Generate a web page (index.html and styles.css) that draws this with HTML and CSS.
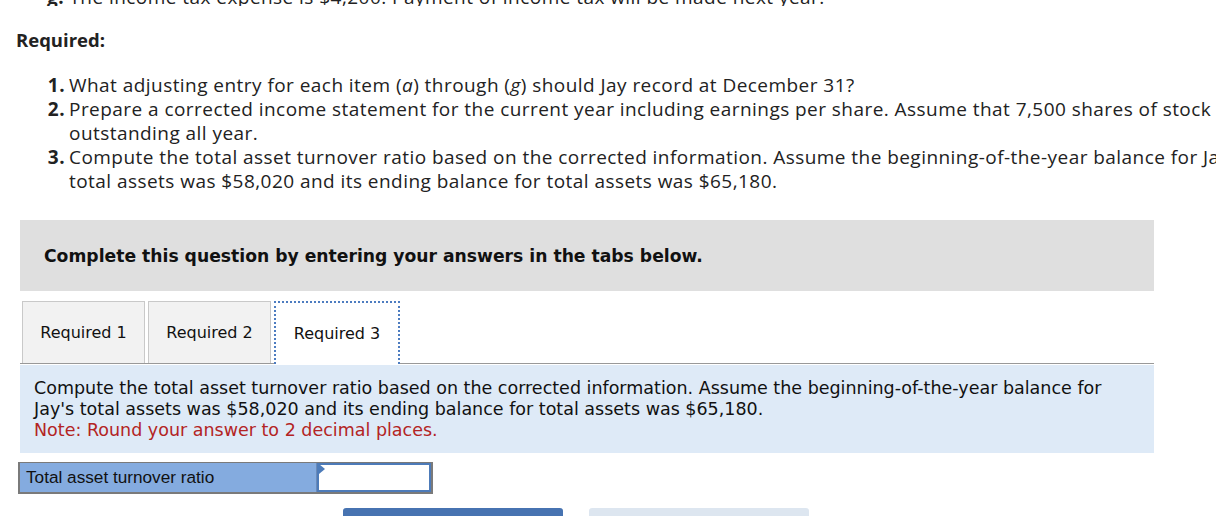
FILE: index.html
```html
<!DOCTYPE html>
<html>
<head>
<meta charset="utf-8">
<link rel="stylesheet" href="styles.css">
</head>
<body>
<div class="page">
  <div class="cut"><p class="cut-line"><span class="num">g.</span> The income tax expense is $4,200. Payment of income tax will be made next year.</p></div>
  <h3 class="req-title">Required:</h3>
  <ol class="req-list">
    <li><span class="num">1.</span><span class="txt">What adjusting entry for each item (<i>a</i>) through (<i>g</i>) should Jay record at December 31?</span></li>
    <li><span class="num">2.</span><span class="txt">Prepare a corrected income statement for the current year including earnings per share. Assume that 7,500 shares of stock were outstanding all year.</span></li>
    <li><span class="num">3.</span><span class="txt">Compute the total asset turnover ratio based on the corrected information. Assume the beginning-of-the-year balance for Jay's total assets was $58,020 and its ending balance for total assets was $65,180.</span></li>
  </ol>
  <div class="panel">
    <div class="instructions">Complete this question by entering your answers in the tabs below.</div>
    <div class="tabs">
      <div class="tab">Required 1</div>
      <div class="tab">Required 2</div>
      <div class="tab active">Required 3</div>
    </div>
    <div class="info">
      <p>Compute the total asset turnover ratio based on the corrected information. Assume the beginning-of-the-year balance for Jay's total assets was $58,020 and its ending balance for total assets was $65,180.</p>
      <p class="note">Note: Round your answer to 2 decimal places.</p>
    </div>
    <div class="answer">
      <div class="label">Total asset turnover ratio</div>
      <div class="input"><span class="flag"></span></div>
    </div>
    <div class="buttons">
      <div class="btn prev"></div>
      <div class="btn next"></div>
    </div>
  </div>
</div>
</body>
</html>
```
FILE: styles.css
```css
html, body {
  margin: 0;
  padding: 0;
  background: #fff;
}
.page {
  width: 1216px;
  height: 516px;
  overflow: hidden;
  font-family: "Open Sans", "Noto Sans", sans-serif;
  color: #222;
}
.cut {
  height: 6px;
  overflow: hidden;
}
.cut-line {
  margin: -15px 0 0 0;
  padding-left: 47px;
  font-size: 19px;
  letter-spacing: 0.45px;
  line-height: 24px;
  white-space: nowrap;
}
.cut-line .num {
  font-weight: 700;
}
.req-title {
  margin: 22px 0 0 16px;
  font-size: 18.5px;
  line-height: 24px;
  font-weight: 700;
}
.req-list {
  list-style: none;
  margin: 21px 0 0 0;
  padding: 0;
  font-size: 19px;
  letter-spacing: 0.45px;
  line-height: 24px;
  width: 1280px;
}
.req-list li {
  display: flex;
}
.req-list .num {
  width: 69px;
  flex: 0 0 69px;
  text-align: right;
  padding-right: 4px;
  box-sizing: border-box;
  font-weight: 700;
}
.req-list .txt {
  flex: 1;
}
.panel {
  margin: 27px 0 0 20px;
  width: 1134px;
  font-family: "DejaVu Sans", Verdana, sans-serif;
}
.instructions {
  background: #dfdfdf;
  height: 71px;
  padding-left: 24px;
  box-sizing: border-box;
  display: flex;
  align-items: center;
  font-weight: 700;
  font-size: 17.2px;
  color: #111;
}
.tabs {
  display: flex;
  margin-top: 10px;
  gap: 3px;
  border-bottom: 1px solid #999;
  padding-left: 2px;
}
.tab {
  width: 123px;
  height: 62px;
  box-sizing: border-box;
  background: #f2f2f2;
  border: 1px solid #c9c9c9;
  border-bottom: none;
  display: flex;
  align-items: center;
  justify-content: center;
  font-size: 16px;
  color: #111;
}
.tab.active {
  background: #fff;
  width: 126px;
  border: 2px dotted #4d7cc0;
  border-bottom: none;
  margin-bottom: -1px;
  height: 63px;
}
.info {
  margin-top: 1px;
  background: #deeaf7;
  padding: 13px 40px 12px 14px;
  font-size: 17.5px;
  line-height: 21px;
  color: #111;
}
.info p {
  margin: 0;
}
.info .note {
  color: #b32424;
}
.answer {
  display: flex;
  margin: 9px 0 0 -2px;
  width: 415px;
  height: 32px;
  border: 2px solid #7a7a7a;
  border-top-width: 1px;
  box-sizing: border-box;
}
.label {
  width: 297px;
  background: #84abdf;
  border-right: 1px solid #6a8ab8;
  font-family: "Liberation Sans", Arial, sans-serif;
  font-size: 17.2px;
  color: #111;
  display: flex;
  align-items: center;
  padding-left: 6px;
  box-sizing: border-box;
}
.input {
  position: relative;
  flex: 1;
  background: #fff;
  border: 2px solid #4d7bb9;
}
.flag {
  position: absolute;
  left: 0;
  top: 0;
  width: 0;
  height: 0;
  border-top: 5px solid transparent;
  border-bottom: 5px solid transparent;
  border-left: 6px solid #4d7bb9;
  margin-top: -1px;
}
.buttons {
  display: flex;
  gap: 26px;
  margin: 14px 0 0 323px;
}
.btn {
  width: 220px;
  height: 30px;
  border-radius: 3px 3px 0 0;
}
.btn.prev {
  background: #4773b1;
}
.btn.next {
  background: #dde6f0;
}
```
